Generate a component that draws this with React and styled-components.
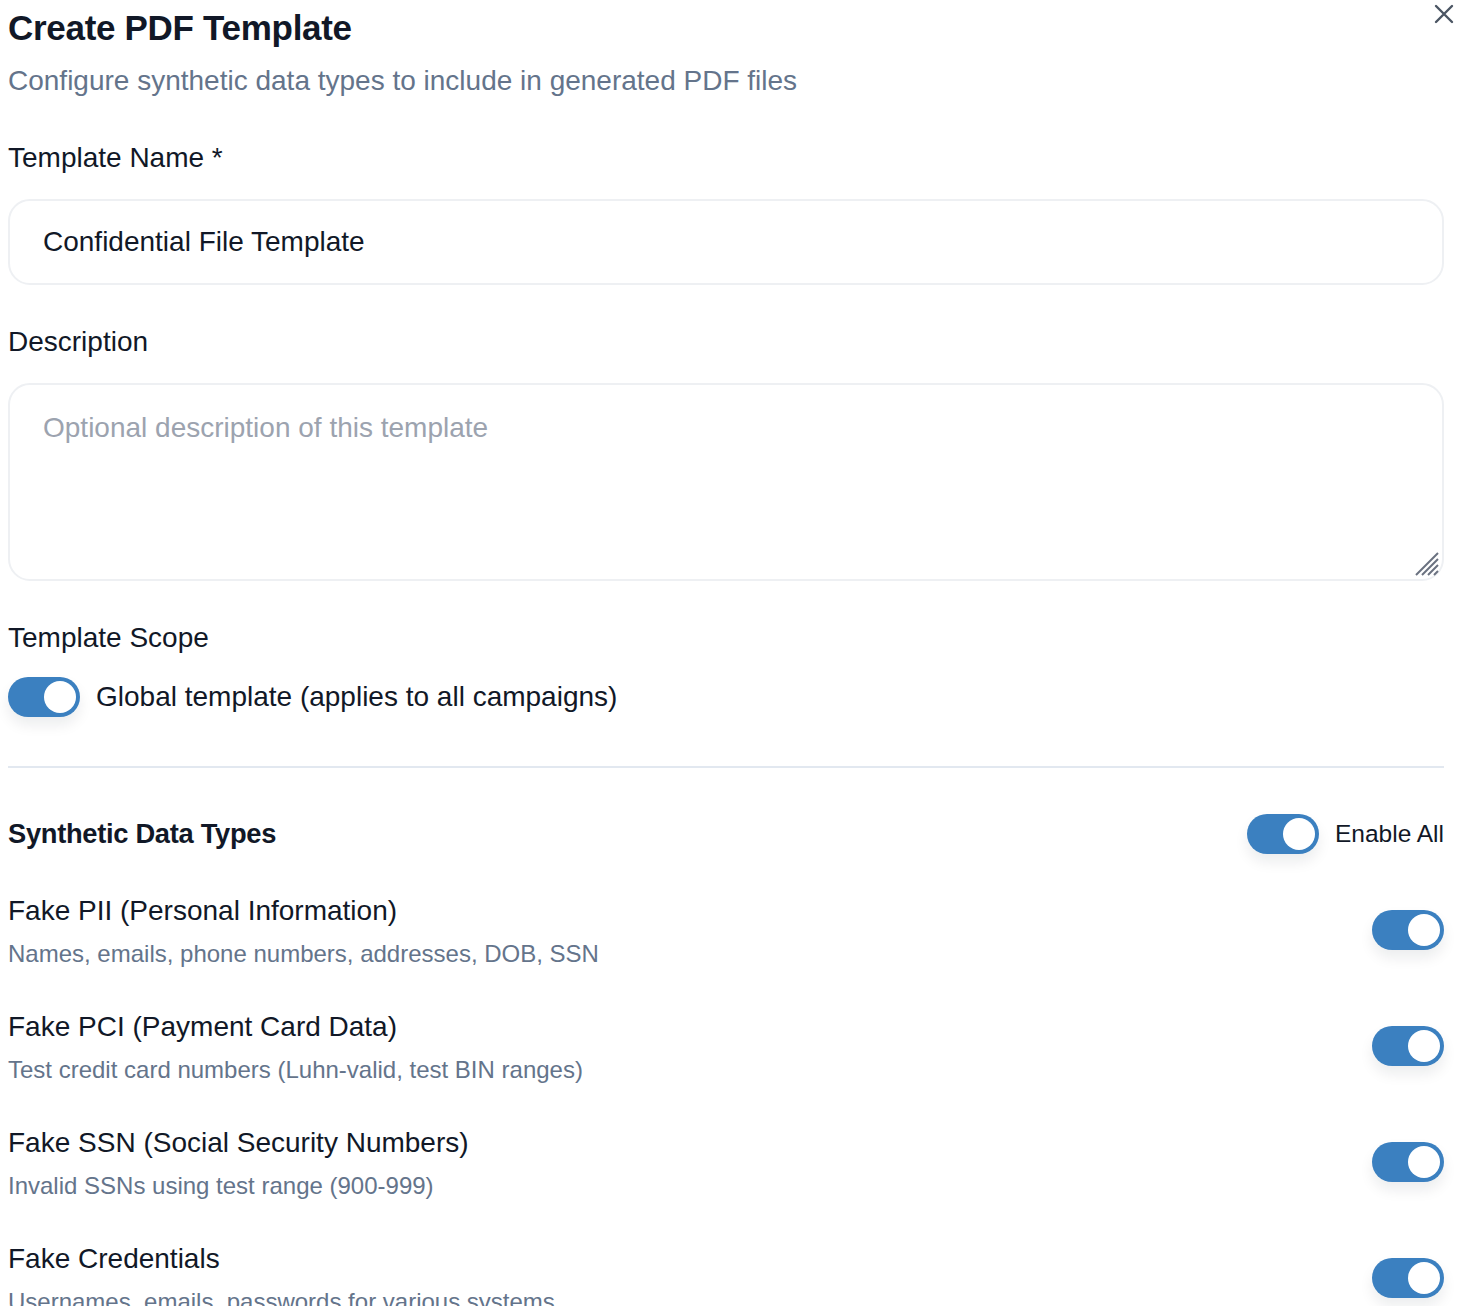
import React, { useState } from "react";
import styled, { createGlobalStyle } from "styled-components";

const GlobalStyle = createGlobalStyle`
  body {
    margin: 0;
    background: #ffffff;
    font-family: "Liberation Sans", Arial, Helvetica, sans-serif;
    color: #111827;
  }
  * { box-sizing: border-box; }
`;

const Modal = styled.div`
  position: relative;
  width: 1464px;
  padding: 0 20px 0 8px;
`;

const CloseButton = styled.button`
  position: absolute;
  top: 2px;
  right: 8px;
  width: 24px;
  height: 24px;
  padding: 0;
  border: none;
  background: transparent;
  color: #4b5563;
  cursor: pointer;
`;

const Title = styled.h1`
  margin: 0;
  padding-top: 8px;
  font-size: 35px;
  line-height: 40px;
  font-weight: 700;
  color: #111827;
  letter-spacing: -0.3px;
`;

const Subtitle = styled.p`
  margin: 16px 0 0;
  font-size: 28px;
  line-height: 34px;
  color: #64748b;
`;

const Field = styled.div`
  margin-top: ${(p) => p.$top}px;
`;

const Label = styled.label`
  display: block;
  font-size: 28px;
  line-height: 34px;
  color: #111827;
`;

const TextInput = styled.input`
  display: block;
  width: 100%;
  height: 86px;
  margin-top: 24px;
  padding: 0 33px;
  border: 2px solid #eef0f3;
  border-radius: 22px;
  font-family: inherit;
  font-size: 28px;
  color: #111827;
  outline: none;
`;

const AreaBox = styled.div`
  position: relative;
  margin-top: 24px;
`;

const TextArea = styled.textarea`
  display: block;
  width: 100%;
  height: 198px;
  padding: 26px 33px;
  border: 2px solid #eef0f3;
  border-radius: 22px;
  font-family: inherit;
  font-size: 28px;
  line-height: 34px;
  color: #111827;
  outline: none;
  resize: none;

  &::placeholder {
    color: #9ca3af;
  }
`;

const Grip = styled.svg`
  position: absolute;
  right: 4px;
  bottom: 4px;
  pointer-events: none;
`;

const ScopeRow = styled.div`
  display: flex;
  align-items: center;
  gap: 16px;
  margin-top: 22px;
`;

const ScopeText = styled.span`
  font-size: 28px;
  line-height: 34px;
  color: #111827;
`;

const Track = styled.button`
  position: relative;
  flex: none;
  width: 72px;
  height: 40px;
  padding: 0;
  border: none;
  border-radius: 20px;
  background: ${(p) => (p.$on ? "#3b80c0" : "#cbd5e1")};
  box-shadow: 0 8px 14px rgba(15, 23, 42, 0.08);
  cursor: pointer;
`;

const Knob = styled.span`
  position: absolute;
  top: 4px;
  left: ${(p) => (p.$on ? "36px" : "4px")};
  width: 32px;
  height: 32px;
  border-radius: 50%;
  background: #ffffff;
  transition: left 0.15s;
`;

const Divider = styled.hr`
  margin: 49px 0 0;
  border: none;
  border-top: 2px solid #e2e8f0;
`;

const SectionHeader = styled.div`
  display: flex;
  align-items: center;
  justify-content: space-between;
  margin-top: 46px;
`;

const SectionTitle = styled.h2`
  margin: 0;
  font-size: 27.3px;
  line-height: 40px;
  font-weight: 700;
  color: #111827;
  letter-spacing: -0.3px;
`;

const EnableAll = styled.div`
  display: flex;
  align-items: center;
  gap: 16px;
  font-size: 24.5px;
  color: #111827;
`;

const TypeList = styled.div`
  display: flex;
  flex-direction: column;
  gap: 42px;
  margin-top: 40px;
`;

const TypeRow = styled.div`
  display: flex;
  justify-content: space-between;
  align-items: flex-start;
`;

const TypeText = styled.div`
  display: flex;
  flex-direction: column;
  gap: 12px;
`;

const TypeName = styled.div`
  font-size: 28px;
  line-height: 34px;
  color: #111827;
`;

const TypeDesc = styled.div`
  font-size: 24px;
  line-height: 28px;
  color: #64748b;
`;

const ToggleWrap = styled.div`
  padding-top: 16px;
`;

function Toggle({ on, onChange }) {
  return (
    <Track type="button" $on={on} onClick={() => onChange(!on)}>
      <Knob $on={on} />
    </Track>
  );
}

const dataTypes = [
  { id: "pii", name: "Fake PII (Personal Information)", desc: "Names, emails, phone numbers, addresses, DOB, SSN" },
  { id: "pci", name: "Fake PCI (Payment Card Data)", desc: "Test credit card numbers (Luhn-valid, test BIN ranges)" },
  { id: "ssn", name: "Fake SSN (Social Security Numbers)", desc: "Invalid SSNs using test range (900-999)" },
  { id: "cred", name: "Fake Credentials", desc: "Usernames, emails, passwords for various systems" },
];

export default function App() {
  const [name, setName] = useState("Confidential File Template");
  const [global, setGlobal] = useState(true);
  const [enabled, setEnabled] = useState({ pii: true, pci: true, ssn: true, cred: true });

  const allOn = Object.values(enabled).every(Boolean);
  const setAll = (v) => setEnabled({ pii: v, pci: v, ssn: v, cred: v });

  return (
    <>
      <GlobalStyle />
      <Modal>
        <CloseButton aria-label="Close">
          <svg width="24" height="24" viewBox="0 0 24 24" fill="none" stroke="currentColor" strokeWidth="2.4" strokeLinecap="round">
            <path d="M4 4L20 20M20 4L4 20" />
          </svg>
        </CloseButton>

        <Title>Create PDF Template</Title>
        <Subtitle>Configure synthetic data types to include in generated PDF files</Subtitle>

        <Field $top={43}>
          <Label>Template Name *</Label>
          <TextInput value={name} onChange={(e) => setName(e.target.value)} />
        </Field>

        <Field $top={40}>
          <Label>Description</Label>
          <AreaBox>
            <TextArea placeholder="Optional description of this template" />
            <Grip width="26" height="26" viewBox="0 0 26 26" stroke="#6b7280" strokeWidth="2">
              <path d="M2 24L24 2M8 24L24 8M14 24L24 14M20 24L24 20" />
            </Grip>
          </AreaBox>
        </Field>

        <Field $top={40}>
          <Label>Template Scope</Label>
          <ScopeRow>
            <Toggle on={global} onChange={setGlobal} />
            <ScopeText>Global template (applies to all campaigns)</ScopeText>
          </ScopeRow>
        </Field>

        <Divider />

        <SectionHeader>
          <SectionTitle>Synthetic Data Types</SectionTitle>
          <EnableAll>
            <Toggle on={allOn} onChange={setAll} />
            <span>Enable All</span>
          </EnableAll>
        </SectionHeader>

        <TypeList>
          {dataTypes.map((t) => (
            <TypeRow key={t.id}>
              <TypeText>
                <TypeName>{t.name}</TypeName>
                <TypeDesc>{t.desc}</TypeDesc>
              </TypeText>
              <ToggleWrap>
                <Toggle
                  on={enabled[t.id]}
                  onChange={(v) => setEnabled({ ...enabled, [t.id]: v })}
                />
              </ToggleWrap>
            </TypeRow>
          ))}
        </TypeList>
      </Modal>
    </>
  );
}
